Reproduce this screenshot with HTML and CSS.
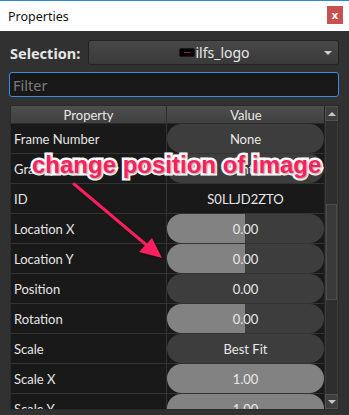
FILE: index.html
```html
<!DOCTYPE html>
<html lang="en">
<head>
<meta charset="UTF-8">
<title>Properties</title>
<link rel="stylesheet" href="styles.css">
</head>
<body>
<div class="window">
  <div class="titlebar">
    <span class="title">Properties</span>
    <span class="close">x</span>
  </div>

  <div class="panel">
    <div class="select-row">
      <span class="select-label">Selection:</span>
      <div class="combo">
        <span class="combo-text"><span class="redact"></span>ilfs_logo</span>
        <span class="combo-arrow"></span>
      </div>
    </div>

    <div class="filter">Filter</div>

    <div class="table-wrap">
      <div class="table">
        <div class="thead">
          <div class="th">Property</div>
          <div class="th">Value</div>
        </div>
        <div class="row"><div class="name">Frame Number</div><div class="val"><div class="pill">None</div></div></div>
        <div class="row"><div class="name">Gravity</div><div class="val"><div class="pill">Center</div></div></div>
        <div class="row"><div class="name">ID</div><div class="val"><div class="plain">S0LLJD2ZTO</div></div></div>
        <div class="row"><div class="name">Location X</div><div class="val"><div class="pill half">0.00</div></div></div>
        <div class="row"><div class="name">Location Y</div><div class="val"><div class="pill half">0.00</div></div></div>
        <div class="row"><div class="name">Position</div><div class="val"><div class="pill">0.00</div></div></div>
        <div class="row"><div class="name">Rotation</div><div class="val"><div class="pill half">0.00</div></div></div>
        <div class="row"><div class="name">Scale</div><div class="val"><div class="pill">Best Fit</div></div></div>
        <div class="row"><div class="name">Scale X</div><div class="val"><div class="pill full">1.00</div></div></div>
        <div class="row"><div class="name">Scale Y</div><div class="val"><div class="pill full">1.00</div></div></div>
      </div>
      <div class="scrollbar">
        <div class="sb-btn"><span class="tri-up"></span></div>
        <div class="sb-track">
          <div class="sb-space top"></div>
          <div class="sb-handle"></div>
          <div class="sb-space"></div>
        </div>
        <div class="sb-btn"><span class="tri-down"></span></div>
      </div>
    </div>
  </div>

  <div class="note">change position of image</div>
  <svg class="note-arrow" width="349" height="415" viewBox="0 0 349 415">
    <line x1="74" y1="184" x2="150" y2="248" stroke="#fb1f5f" stroke-width="3" stroke-linecap="round"/>
    <polygon points="162,258 139,252 152,238" fill="#fb1f5f"/>
  </svg>
</div>
</body>
</html>
```

FILE: styles.css
```css
* { box-sizing: border-box; margin: 0; padding: 0; }
body { width: 349px; height: 415px; overflow: hidden; background: #2a2a2a; font-family: 'Noto Sans', 'Open Sans', sans-serif; }

.window { position: relative; width: 349px; height: 415px; background: #313131; }

.titlebar { height: 31px; background: #fff; border-top: 1px solid #2b87d9; display: flex; align-items: center; justify-content: space-between; padding: 0 6px 0 8px; }
.title { font-size: 12.5px; color: #111; }
.close { width: 16px; height: 18px; background: #c75050; color: #fff; font-size: 11px; font-weight: 700; display: flex; align-items: center; justify-content: center; margin-top: -3px; }

.panel { padding: 9px 10px 0 9px; }

.select-row { display: flex; align-items: center; height: 25px; }
.select-label { width: 79px; padding-left: 1px; font-size: 14.5px; font-weight: 700; color: #e6e6e6; }
.combo { flex: 1; height: 25px; border: 1px solid #232323; border-radius: 3px; background: linear-gradient(#484848, #3a3a3a); display: flex; align-items: center; justify-content: center; position: relative; }
.combo-text { font-size: 14px; color: #e8e8e8; display: flex; align-items: center; margin-left: 2px; }
.redact { width: 16px; height: 9px; background: #000; border: 1px solid #1a1a1a; border-radius: 2px; position: relative; }
.redact::after { content: ''; position: absolute; left: 4px; top: 3px; width: 7px; height: 1px; background: #9a2024; }
.combo-arrow { position: absolute; right: 6px; top: 10px; width: 0; height: 0; border-left: 4px solid transparent; border-right: 4px solid transparent; border-top: 4px solid #cfcfcf; }

.filter { margin-top: 7px; height: 25px; border: 1px solid #3c8ee2; border-radius: 3px; background: #181818; color: #7b7b7b; font-size: 14.5px; padding-left: 3px; display: flex; align-items: center; }

.table-wrap { margin: 8px 0 0 1px; display: flex; height: 305px; border: 1px solid #2a2a2a; }
.table { width: 315px; background: #191919; overflow: hidden; font-family: Lato, 'Noto Sans', sans-serif; }
.thead { display: grid; grid-template-columns: 156px 159px; height: 18px; }
.th { background: linear-gradient(#4e4e4e, #404040); border-right: 1px solid #2d2d2d; border-bottom: 1px solid #2a2a2a; color: #e8e8e8; font-size: 13px; display: flex; align-items: center; justify-content: center; }
.row { display: grid; grid-template-columns: 156px 159px; height: 30px; border-bottom: 1px solid #333; }
.name { border-right: 1px solid #333; color: #e6e6e6; font-size: 13px; padding-left: 3px; display: flex; align-items: center; white-space: nowrap; }
.val { padding: 0 2px 0 0; display: flex; align-items: stretch; }
.pill { flex: 1; border-radius: 15px; background: #3d3d3d; color: #e8e8e8; font-size: 13px; display: flex; align-items: center; justify-content: center; }
.pill.half { background: linear-gradient(to right, #828282 50%, #3d3d3d 50%); }
.pill.full { background: #828282; }
.plain { flex: 1; color: #e8e8e8; font-size: 13px; display: flex; align-items: center; justify-content: center; }

.scrollbar { width: 14px; background: #2e2e2e; border-left: 1px solid #262626; display: flex; flex-direction: column; }
.sb-btn { height: 15px; background: #3f3f3f; border: 1px solid #505050; display: flex; align-items: center; justify-content: center; }
.tri-up { border-left: 4px solid transparent; border-right: 4px solid transparent; border-bottom: 4px solid #c8c8c8; }
.tri-down { border-left: 4px solid transparent; border-right: 4px solid transparent; border-top: 4px solid #c8c8c8; }
.sb-track { flex: 1; display: flex; flex-direction: column; border-left: 1px solid #3c3c3c; border-right: 1px solid #3c3c3c; }
.sb-space { flex: 1; }
.sb-space.top { flex: 0 0 83px; }
.sb-handle { height: 96px; background: #3a3a3a; border: 1px solid #4c4c4c; }

.note { position: absolute; left: 32px; top: 151px; font-family: 'Liberation Sans', Arial, sans-serif; font-size: 24px; font-weight: 700; color: #fb1f5f; white-space: nowrap;
  -webkit-text-stroke: 5px #fff; paint-order: stroke fill; text-shadow: 1px 1px 2px rgba(0,0,0,0.4); }
.note-arrow { position: absolute; left: 0; top: 0; pointer-events: none; filter: drop-shadow(1px 1px 1px rgba(0,0,0,0.5)); }
```
